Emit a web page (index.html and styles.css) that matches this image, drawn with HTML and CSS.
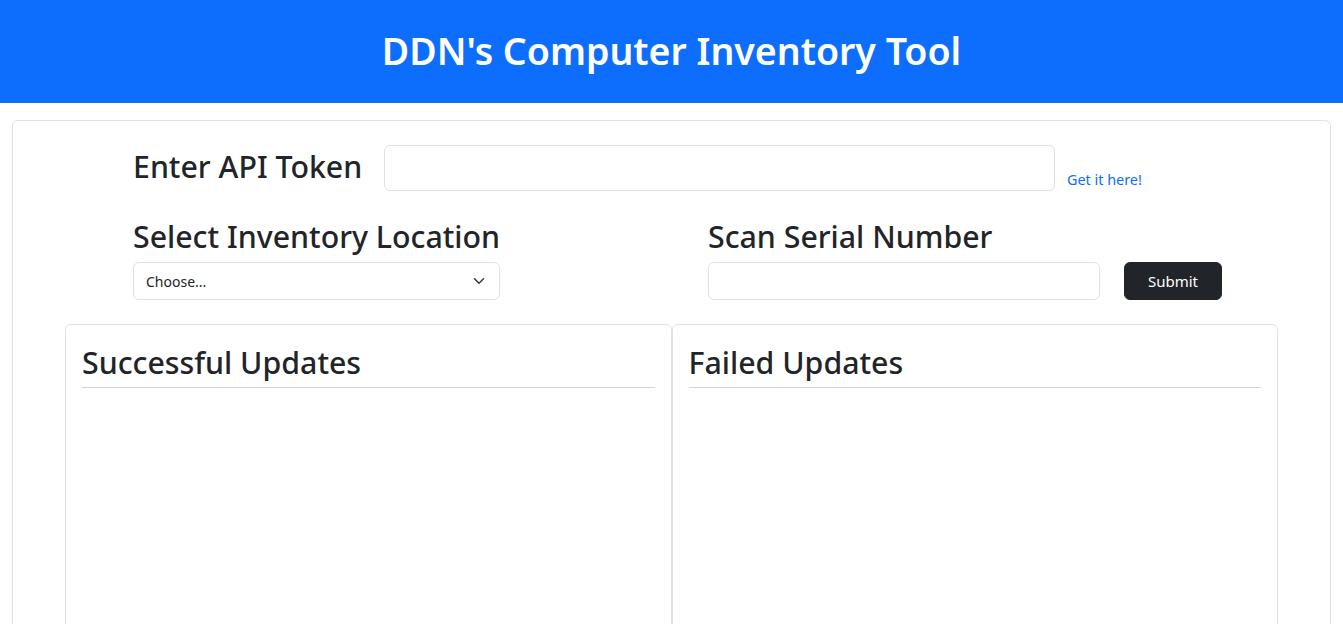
FILE: index.html
```html
<!DOCTYPE html>
<html lang="en">
<head>
<meta charset="utf-8">
<title>DDN's Computer Inventory Tool</title>
<link rel="stylesheet" href="styles.css">
</head>
<body>
<header class="topbar">
  <h1 class="title">DDN's Computer Inventory Tool</h1>
</header>
<main class="page">
  <section class="panel">
    <div class="token-row">
      <label class="big-label token-label" for="token">Enter API Token</label>
      <input id="token" class="field token-field" type="text">
      <a class="token-link" href="#">Get it here!</a>
    </div>
    <div class="form-grid">
      <div class="form-col">
        <label class="big-label" for="loc">Select Inventory Location</label>
        <div class="select-wrap">
          <select id="loc" class="field select-field">
            <option>Choose...</option>
          </select>
          <svg class="chevron" width="16" height="12" viewBox="0 0 16 16" aria-hidden="true"><path d="m2 5 6 6 6-6" fill="none" stroke="#343a40" stroke-width="2" stroke-linecap="round" stroke-linejoin="round"/></svg>
        </div>
      </div>
      <div class="form-col">
        <label class="big-label" for="serial">Scan Serial Number</label>
        <div class="serial-row">
          <input id="serial" class="field serial-field" type="text">
          <button class="btn-submit" type="button">Submit</button>
        </div>
      </div>
    </div>
    <div class="results">
      <div class="result-card">
        <h2 class="result-title">Successful Updates</h2>
        <hr class="rule">
      </div>
      <div class="result-card">
        <h2 class="result-title">Failed Updates</h2>
        <hr class="rule">
      </div>
    </div>
  </section>
</main>
</body>
</html>
```

FILE: styles.css
```css
* { box-sizing: border-box; }
html, body { margin: 0; padding: 0; }
body {
  font-family: "Noto Sans", "Open Sans", "Liberation Sans", sans-serif;
  color: #212529;
  background: #fff;
  font-size: 16px;
}
.topbar {
  background: #0d6efd;
  height: 103px;
  display: flex;
  align-items: center;
  justify-content: center;
}
.title {
  margin: 0;
  color: #fff;
  font-size: 37.5px;
  font-weight: 600;
  line-height: 1.2;
  padding-bottom: 3px;
}
.page {
  padding: 17px 12px 0;
}
.panel {
  border: 1px solid #dee2e6;
  border-radius: 6px;
  padding: 24px 0 0;
  min-height: 520px;
}
.token-row {
  display: flex;
  align-items: flex-start;
  padding-left: 120px;
}
.big-label {
  font-size: 30.3px;
  font-weight: 500;
  line-height: 1.2;
  color: #212529;
  display: block;
}
.token-label {
  width: 251px;
  padding-top: 4px;
}
.field {
  border: 1px solid #dee2e6;
  border-radius: 6px;
  background: #fff;
  font-family: inherit;
  font-size: 14px;
  color: #212529;
}
.token-field {
  width: 671px;
  height: 46px;
}
.token-link {
  color: #0d6efd;
  font-size: 14.4px;
  text-decoration: none;
  margin-left: 12px;
  margin-top: 25px;
}
.form-grid {
  display: grid;
  grid-template-columns: 575px 1fr;
  padding-left: 120px;
  margin-top: 28px;
}
.form-col .big-label { margin-bottom: 7px; }
.select-wrap {
  position: relative;
  width: 367px;
}
.select-field {
  appearance: none;
  -webkit-appearance: none;
  width: 100%;
  height: 38px;
  padding: 0 36px 0 12px;
  display: block;
}
.chevron {
  position: absolute;
  right: 13px;
  top: 13px;
  pointer-events: none;
}
.serial-row {
  display: flex;
  gap: 24px;
}
.serial-field {
  width: 392px;
  height: 38px;
}
.btn-submit {
  width: 98px;
  height: 38px;
  background: #212529;
  color: #fff;
  border: 1px solid #212529;
  border-radius: 6px;
  font-family: inherit;
  font-size: 15px;
}
.results {
  display: flex;
  margin: 24px 52px 0 52px;
}
.result-card {
  flex: 1;
  border: 1px solid #dee2e6;
  border-radius: 6px;
  padding: 16px 16px 0;
  min-height: 330px;
}
.result-title {
  margin: 0;
  font-size: 30.3px;
  font-weight: 500;
  line-height: 1.2;
  padding-top: 4px;
}
.rule {
  margin: 5px 0 0;
  border: 0;
  border-top: 1px solid #d3d4d5;
}
```
